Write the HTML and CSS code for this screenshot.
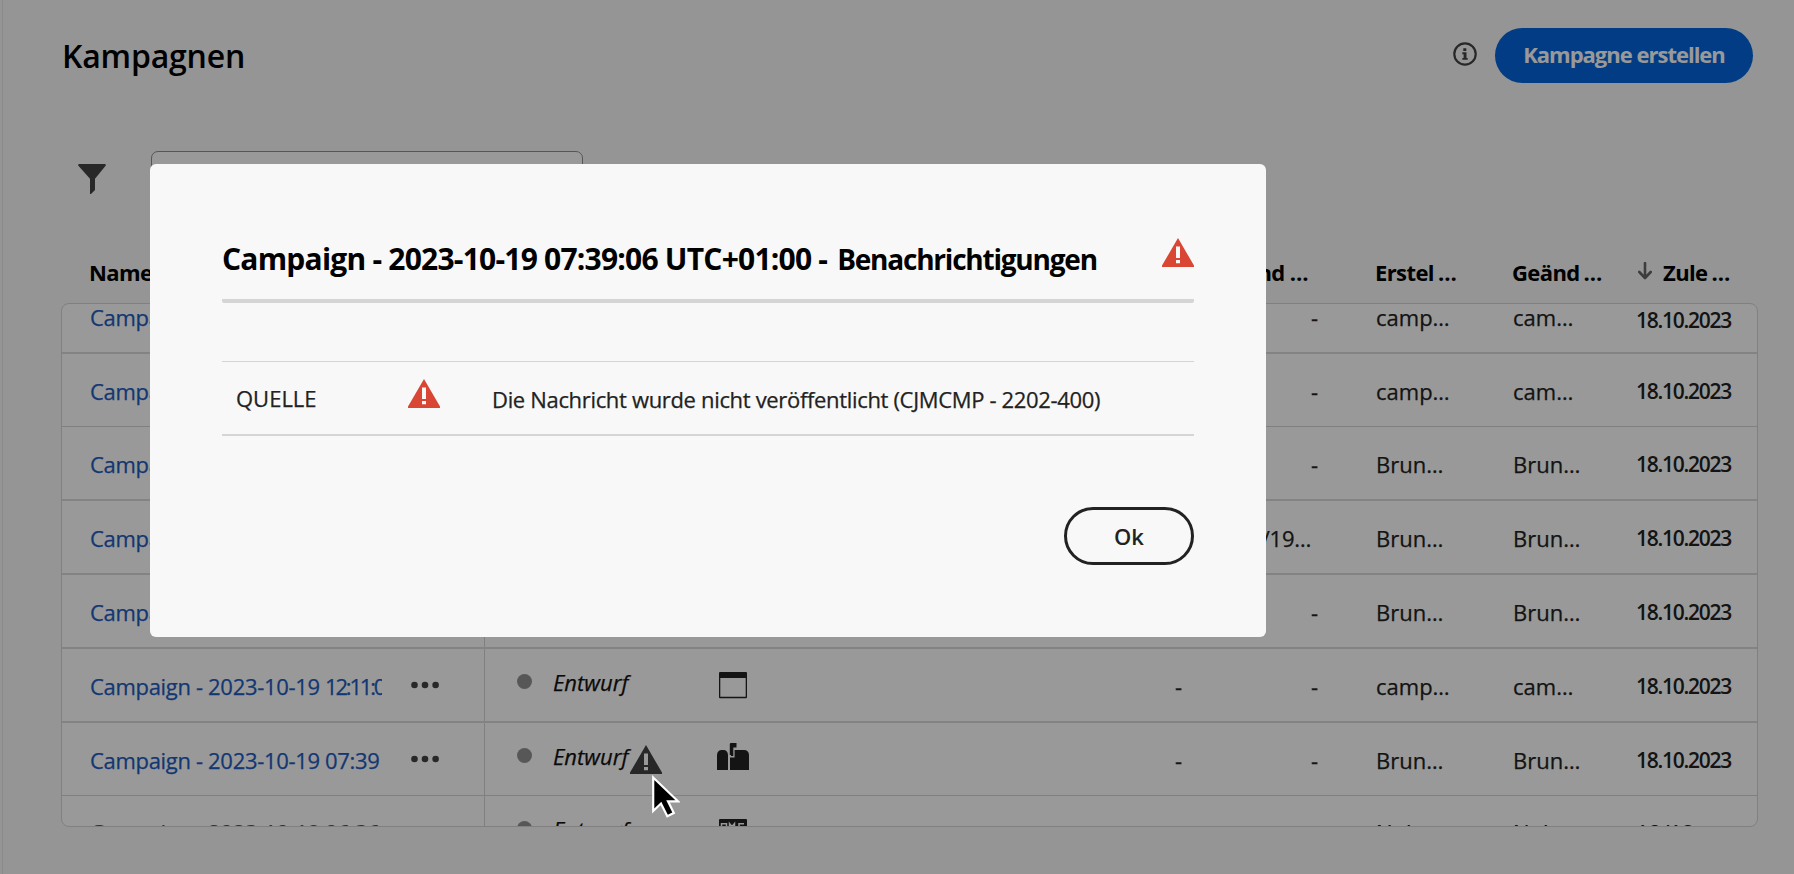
FILE: index.html
```html
<!DOCTYPE html>
<html lang="de">
<head>
<meta charset="utf-8">
<title>Kampagnen</title>
<link rel="stylesheet" href="styles.css">
</head>
<body>
<svg class="defs" width="0" height="0">
  <symbol id="alert" viewBox="0 0 32 29">
    <path fill-rule="evenodd" d="M16 0 L32 27.6 V29 H0 V27.6 Z M14 8.500 V20 H18 V8.500 Z M14 22 V25.300 H18 V22 Z"/>
  </symbol>
  <symbol id="dots" viewBox="0 0 28 8">
    <circle cx="3.500" cy="4" r="3.300"/><circle cx="14" cy="4" r="3.300"/><circle cx="24.600" cy="4" r="3.300"/>
  </symbol>
</svg>

<main class="page">
  <header class="head">
    <h1 class="head-title">Kampagnen</h1>
    <div class="head-actions">
      <svg class="info" viewBox="0 0 24 24"><circle cx="12" cy="12" r="10.700" fill="none" stroke="#444" stroke-width="2.200"/><path fill="#444" d="M10.300 6.200h3v2.800h-3zM9.300 10.300h4.200v5.600h1.200v1.900H9.300v-1.900h1.300v-3.700H9.300z"/></svg>
      <button class="cta">Kampagne erstellen</button>
    </div>
  </header>

  <div class="tools">
    <svg class="filter" viewBox="0 0 28 30"><path d="M1 0h26q1.300.5.6 1.800L17 14.800V26l-4 4h-1V14.800L.4 1.800Q-.3.500 1 0z"/></svg>
    <div class="search"></div>
  </div>

  <div class="cols colhead">
    <span class="c-name">Name</span><span></span><span></span><span></span>
    <span class="c-end">End …</span>
    <span class="c-created">Erstel<span class="gap">…</span></span>
    <span>Geänd<span class="gap">…</span></span>
    <span class="c-sort"><svg class="arrow" viewBox="0 0 14 18"><path d="M7 1v14M1.300 10L7 16l5.700-6" fill="none" stroke="#666" stroke-width="2.600" stroke-linecap="round" stroke-linejoin="round"/></svg><span>Zule<span class="gap">…</span></span></span>
  </div>

  <div class="table">
    <div class="cols row row-first">
      <div class="c-name"><a class="link">Campaign</a></div><div></div><div></div><div></div>
      <div class="c-end">-</div><div class="c-created">camp…</div><div>cam…</div><div class="date date-low">18.10.2023</div>
    </div>
    <div class="cols row row-thin">
      <div class="c-name"><a class="link">Campaign</a></div><div></div><div></div><div></div>
      <div class="c-end">-</div><div class="c-created">camp…</div><div>cam…</div><div class="date">18.10.2023</div>
    </div>
    <div class="cols row">
      <div class="c-name"><a class="link">Campaign</a></div><div></div><div></div><div></div>
      <div class="c-end">-</div><div class="c-created">Brun…</div><div>Brun…</div><div class="date">18.10.2023</div>
    </div>
    <div class="cols row">
      <div class="c-name"><a class="link">Campaign</a></div><div></div><div></div><div></div>
      <div class="c-end c-end-date">10/19…</div><div class="c-created">Brun…</div><div>Brun…</div><div class="date">18.10.2023</div>
    </div>
    <div class="cols row">
      <div class="c-name"><a class="link">Campaign</a></div><div></div><div></div><div></div>
      <div class="c-end">-</div><div class="c-created">Brun…</div><div>Brun…</div><div class="date">18.10.2023</div>
    </div>
    <div class="cols row">
      <div class="c-name"><a class="link">Campaign - 2023-10-19 <span class="tight">12:11:07</span></a><svg class="more"><use href="#dots"/></svg></div>
      <div class="c-status"><i class="dot"></i><em>Entwurf</em></div>
      <div class="c-channel c-channel-low"><svg width="32" height="27" viewBox="0 0 32 27"><path fill-rule="evenodd" d="M3 0h26q1 0 1 1v24.300q0 1-1 1H3q-1 0-1-1V1q0-1 1-1zM3.300 6v18.700h25.400V6z"/></svg></div>
      <div class="c-start">-</div><div class="c-end">-</div><div class="c-created">camp…</div><div>cam…</div><div class="date">18.10.2023</div>
    </div>
    <div class="cols row row-thin">
      <div class="c-name"><a class="link">Campaign - 2023-10-19 07:39</a><svg class="more"><use href="#dots"/></svg></div>
      <div class="c-status"><i class="dot"></i><em>Entwurf</em><svg class="row-alert"><use href="#alert"/></svg></div>
      <div class="c-channel"><svg width="32" height="27" viewBox="0 0 32 27"><path d="M5 7h1.300Q11 7 11 12.500V27H0V12.500Q0 7 5 7zM14 0h5.500v4.500h-3.200V13H14v-1h-1.200V1.200Q12.800 0 14 0zM17.600 7H27q5 0 5 5.500V27H13V14.400h4.600z"/></svg></div>
      <div class="c-start">-</div><div class="c-end">-</div><div class="c-created">Brun…</div><div>Brun…</div><div class="date">18.10.2023</div>
    </div>
    <div class="cols row row-last">
      <div class="c-name"><a class="link">Campaign - 2023-10-19 06:36</a></div>
      <div class="c-status"><i class="dot"></i><em>Entwurf</em></div>
      <div class="c-channel c-channel-low"><svg width="32" height="27" viewBox="0 0 32 27"><path d="M3 0h26q1 0 1 1v18H2V1q0-1 1-1z"/><path d="M4.500 8V4.800h5V8M12.500 8V4.500l2.500 3 2.500-3V8M27 4.800h-5V8" fill="none" stroke="#fff" stroke-width="1.500"/></svg></div>
      <div></div><div></div><div class="c-created">Nub</div><div>Nub</div><div class="c-clip">10/19</div>
    </div>
  </div>
</main>

<div class="overlay"></div>

<section class="modal" role="dialog">
  <div class="modal-head">
    <h2 class="modal-title"><span class="part-a">Campaign - 2023-10-19 07:39:06 UTC+01:00 -</span><span class="part-b">Benachrichtigungen</span></h2>
    <svg class="alert"><use href="#alert"/></svg>
  </div>
  <div class="notice">
    <span class="source">QUELLE</span>
    <svg class="alert"><use href="#alert"/></svg>
    <span class="message">Die Nachricht wurde nicht veröffentlicht (CJMCMP - 2202-400)</span>
  </div>
  <button class="ok">Ok</button>
</section>

<svg class="cursor" viewBox="0 0 28 44"><path d="M1.200 3.500V37L9 29.500 15.300 42.300 21.800 39 16 27.300H26z" fill="#000" stroke="#fff" stroke-width="2.200"/></svg>
</body>
</html>
```
FILE: styles.css
```css
* { box-sizing: border-box; }
body {
  margin: 0;
  height: 874px;
  overflow: hidden;
  font-family: "Open Sans", sans-serif;
  font-size: 22px;
  line-height: 28px;
  color: #222;
  background: #f8f8f8;
}
.defs { position: absolute; }
h1, h2 { margin: 0; }
svg { display: block; flex: none; }

.page {
  height: 874px;
  margin-left: 2px;
  padding: 28px 37px 0 58px;
  border-left: 1px solid #e6e6e6;
  display: flex;
  flex-direction: column;
}
.head { display: flex; justify-content: space-between; align-items: flex-start; }
.head-title {
  padding: 8px 0 0 1px;
  font-size: 32px;
  line-height: 40px;
  font-weight: 600;
  letter-spacing: -0.200px;
  color: #000;
}
.head-actions { display: flex; gap: 18px; padding-right: 4px; }
.info { width: 24px; height: 24px; margin-top: 14px; }
.cta {
  width: 258px;
  height: 55px;
  padding: 0 0 3px;
  border: 0;
  border-radius: 28px;
  background: #0265dc;
  color: #fff;
  font: 700 22px "Open Sans", sans-serif;
  letter-spacing: -1px;
}

.tools { display: flex; margin-top: 68px; height: 48px; }
.filter { width: 28px; height: 30px; margin: 13px 45px 0 17px; fill: #444; }
.search { width: 432px; height: 48px; border: 1px solid #909090; border-radius: 7px; background: #fff; }

.cols {
  display: grid;
  grid-template-columns: 423px 232px 330px 136px 136px 194px 123px 1fr;
}
.colhead { margin-top: 59px; height: 45px; font-weight: 700; color: #000; letter-spacing: -0.600px; }
.colhead .c-end { padding-right: 10px; }
.c-name { padding-left: 28px; }
.c-start, .c-end { text-align: right; }
.c-created { padding-left: 57px; }
.c-sort { display: flex; gap: 11px; padding-left: 3px; }
.arrow { width: 14px; height: 18px; margin-top: 4px; }
.gap { margin-left: 4px; }

.table {
  width: 1697px;
  height: 524px;
  overflow: hidden;
  border: 1px solid #d5d5d5;
  border-radius: 8px;
  background: #fff;
}
.row { height: 74px; border-bottom: 2px solid #dadada; -webkit-text-stroke: 0.250px; }
.row > div { padding-top: 23px; }
.row-first { margin-top: -24px; }
.row-thin { height: 73px; border-bottom: 1px solid #d5d5d5; }
.row > .c-name {
  display: flex;
  border-right: 1px solid #d5d5d5;
}
.link {
  width: 292px;
  overflow: hidden;
  white-space: nowrap;
  color: #1f5cc0;
  letter-spacing: -0.320px;
}
.tight { letter-spacing: -2.200px; }
.more { width: 28px; height: 8px; margin: 9px 0 0 29px; fill: #444; }
.c-start, .row > .c-end { padding-right: 1px; }
.row > .c-end-date { padding-right: 8px; letter-spacing: -0.300px; }
.row > .date { font-size: 21px; font-weight: 600; letter-spacing: -1.250px; -webkit-text-stroke: 0; }
.row > .date-low { padding-top: 26px; }
.row > .c-status { display: flex; padding: 20px 0 0 32px; color: #111; }
.c-status em { margin-top: -1px; }
.dot { width: 15px; height: 15px; margin: 5px 21px 0 0; border-radius: 50%; background: #929292; }
.row-alert { width: 32px; height: 29px; margin: 2px 0 0 2px; fill: #444; }
.row > .c-channel { padding-top: 20px; fill: #222; }
.row > .c-channel-low { padding-top: 23px; }

.row-last > .c-name, .row-last > .c-created, .row-last > .c-created + div, .row-last > .c-clip { padding-top: 22px; }

.overlay { position: absolute; inset: 0; background: rgba(0, 0, 0, .4); }

.modal {
  position: absolute;
  left: 150px;
  top: 164px;
  width: 1116px;
  height: 473px;
  padding: 72px 72px;
  border-radius: 6px;
  background: #f8f8f8;
  display: flex;
  flex-direction: column;
}
.modal-head {
  display: flex;
  justify-content: space-between;
  height: 67px;
  border-bottom: 4px solid #d5d5d5;
  border-radius: 2px;
}
.modal-title {
  display: flex;
  align-items: baseline;
  gap: 10px;
  padding-top: 5px;
  white-space: nowrap;
  font-size: 30px;
  line-height: 36px;
  font-weight: 700;
  color: #000;
}
.part-a { letter-spacing: -0.780px; }
.part-b { font-size: 28px; letter-spacing: -1.220px; }
.alert { width: 32px; height: 29px; margin-top: 2px; fill: #da4634; }
.notice {
  display: flex;
  height: 75px;
  margin-top: 58px;
  border-top: 1px solid #d5d5d5;
  border-bottom: 2px solid #d5d5d5;
  -webkit-text-stroke: 0.250px;
}
.source { width: 186px; padding: 22px 0 0 14px; }
.notice .alert { margin-top: 17px; }
.message { padding: 23px 0 0 52px; letter-spacing: -0.330px; }
.ok {
  align-self: flex-end;
  width: 130px;
  height: 58px;
  margin-top: 71px;
  padding: 0;
  border: 3px solid #222;
  border-radius: 29px;
  background: none;
  color: #222;
  font: 600 22px "Open Sans", sans-serif;
}
.cursor { position: absolute; left: 652px; top: 774px; width: 28px; height: 44px; }
```
